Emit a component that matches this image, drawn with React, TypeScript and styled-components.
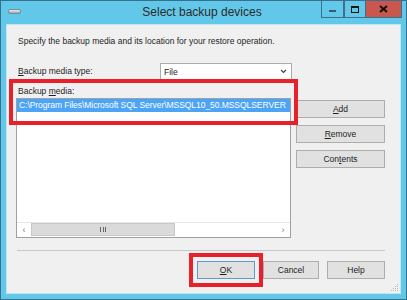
import styled, { createGlobalStyle } from "styled-components";

const GlobalStyle = createGlobalStyle`
  html, body {
    margin: 0;
    padding: 0;
    background: #ffffff;
  }
  * {
    box-sizing: border-box;
  }
`;

const Window = styled.div`
  width: 407px;
  height: 300px;
  border: 1px solid #3a6e8e;
  background-color: #62c8ea;
  padding: 0 5px 5px 5px;
  display: flex;
  flex-direction: column;
  font-family: "Liberation Sans", Arial, sans-serif;
  font-size: 8.5px;
  color: #1e1e1e;
  position: relative;
`;

const TitleBar = styled.div`
  height: 23px;
  display: flex;
  align-items: flex-start;
  position: relative;
`;

const WinIcon = styled.div`
  width: 13px;
  height: 5px;
  margin: 8px 0 0 2px;
  border-radius: 2px;
  background: linear-gradient(#e8eef4, #9aa6b2);
  border: 1px solid #7d8a96;
`;

const Title = styled.div`
  flex: 1;
  text-align: center;
  font-size: 12px;
  line-height: 23px;
  color: #2a2a2a;
  padding-left: 62px;
`;

const Caption = styled.div`
  display: flex;
  margin-top: -1px;
  margin-right: -1px;
  height: 18px;
`;

const CapButton = styled.div<{ $close?: boolean; $w: number }>`
  width: ${(p) => p.$w}px;
  height: 18px;
  display: flex;
  align-items: center;
  justify-content: center;
  background-color: ${(p) => (p.$close ? "#c9574d" : "#62c8ea")};
  border: 1px solid #3f6f8a;
  border-left-width: ${(p) => (p.$close ? 0 : 1)}px;
  &:first-child {
    border-left-width: 1px;
  }
`;

const MinGlyph = styled.div`
  width: 7px;
  height: 2px;
  background: #3a5a70;
  margin-top: 4px;
`;

const MaxGlyph = styled.div`
  width: 8px;
  height: 7px;
  border: 1.5px solid #111;
  border-top-width: 2.5px;
`;

const Client = styled.div`
  flex: 1;
  background-color: #f0f0f0;
  border: 1px solid #bfe6f5;
  padding: 10px 15px 0 9px;
  display: flex;
  flex-direction: column;
  position: relative;
`;

const Description = styled.div`
  line-height: 13px;
  padding-left: 2px;
`;

const TypeRow = styled.div`
  display: flex;
  align-items: center;
  margin-top: 15px;
  padding-left: 2px;
`;

const Label = styled.div`
  line-height: 13px;
`;

const TypeLabel = styled(Label)`
  width: 142px;
`;

const Combo = styled.div`
  width: 132px;
  height: 17px;
  background: #ffffff;
  border: 1px solid #acacac;
  display: flex;
  align-items: center;
  justify-content: space-between;
  padding: 0 4px 0 3px;
`;

const MainGrid = styled.div`
  display: grid;
  grid-template-columns: 275px 89px;
  column-gap: 5px;
  margin-top: 5px;
`;

const MediaLabel = styled(Label)`
  grid-column: 1;
  padding-left: 2px;
`;

const ListBox = styled.div`
  grid-column: 1;
  height: 140px;
  background: #ffffff;
  border: 1px solid #a0a0a0;
  display: flex;
  flex-direction: column;
  overflow: hidden;
`;

const ListBody = styled.div`
  flex: 1;
`;

const SelectedRow = styled.div`
  height: 13px;
  line-height: 13px;
  background-color: #4ca4f6;
  color: #ffffff;
  padding-left: 2px;
  white-space: nowrap;
  overflow: hidden;
  font-size: 8.5px;
  letter-spacing: -0.05px;
`;

const HScroll = styled.div`
  height: 14px;
  display: flex;
  border-top: 1px solid #e6e6e6;
  margin: 0 0 1px 0;
`;

const Arrow = styled.div`
  width: 14px;
  display: flex;
  align-items: center;
  justify-content: center;
  color: #7a7a7a;
  font-size: 9px;
  background: #ffffff;
`;

const Thumb = styled.div`
  width: 144px;
  background-color: #dadada;
  border: 1px solid #c8c8c8;
  display: flex;
  align-items: center;
  justify-content: center;
`;

const Grip = styled.div`
  width: 6px;
  height: 5px;
  border-left: 1px solid #666;
  border-right: 1px solid #666;
  position: relative;
  &:after {
    content: "";
    position: absolute;
    left: 2px;
    top: 0;
    width: 1px;
    height: 5px;
    background: #666;
  }
`;

const Track = styled.div`
  flex: 1;
  background: #ffffff;
`;

const SideButtons = styled.div`
  grid-column: 2;
  grid-row: 2;
  display: flex;
  flex-direction: column;
  gap: 7px;
  padding-top: 2px;
`;

const Button = styled.div<{ $w?: number; $default?: boolean }>`
  width: ${(p) => (p.$w ? `${p.$w}px` : "100%")};
  height: 18px;
  display: flex;
  align-items: center;
  justify-content: center;
  background-color: #e1e1e1;
  border: 1px solid ${(p) => (p.$default ? "#5a9ad6" : "#adadad")};
  color: #1e1e1e;
`;

const Separator = styled.div`
  height: 1px;
  background: #c8c8c8;
  margin: 12px 0 0 1px;
`;

const Footer = styled.div`
  display: flex;
  justify-content: flex-end;
  gap: 8px;
  margin-top: 10px;
`;

const Highlight = styled.div`
  outline: 4px solid #e8202a;
  outline-offset: 4px;
`;

const MediaMarker = styled.div`
  position: absolute;
  left: 2px;
  top: 54px;
  width: 289px;
  height: 46px;
  border: 4px solid #e8202a;
  pointer-events: none;
`;

const ResizeGrip = styled.svg`
  position: absolute;
  right: 1px;
  bottom: 1px;
`;

export default function App() {
  return (
    <>
      <GlobalStyle />
      <Window>
        <TitleBar>
          <WinIcon />
          <Title>Select backup devices</Title>
          <Caption>
            <CapButton $w={23}>
              <MinGlyph />
            </CapButton>
            <CapButton $w={22}>
              <MaxGlyph />
            </CapButton>
            <CapButton $w={36} $close>
              <svg width="9" height="8" viewBox="0 0 9 8">
                <path d="M1 1 L8 7 M8 1 L1 7" stroke="#111" strokeWidth="2" />
              </svg>
            </CapButton>
          </Caption>
        </TitleBar>
        <Client>
          <Description>
            Specify the backup media and its location for your restore operation.
          </Description>
          <TypeRow>
            <TypeLabel>
              <u>B</u>ackup media type:
            </TypeLabel>
            <Combo>
              <span>File</span>
              <svg width="7" height="5" viewBox="0 0 7 5">
                <path d="M1 1 L3.5 3.5 L6 1" stroke="#444" strokeWidth="1.2" fill="none" />
              </svg>
            </Combo>
          </TypeRow>
          <MainGrid>
            <MediaLabel>
              Backup <u>m</u>edia:
            </MediaLabel>
            <ListBox>
              <ListBody>
                <SelectedRow>
                  C:\Program Files\Microsoft SQL Server\MSSQL10_50.MSSQLSERVER
                </SelectedRow>
              </ListBody>
              <HScroll>
                <Arrow>‹</Arrow>
                <Thumb>
                  <Grip />
                </Thumb>
                <Track />
                <Arrow>›</Arrow>
              </HScroll>
            </ListBox>
            <SideButtons>
              <Button>
                <span>
                  <u>A</u>dd
                </span>
              </Button>
              <Button>
                <span>
                  <u>R</u>emove
                </span>
              </Button>
              <Button>
                <span>
                  Con<u>t</u>ents
                </span>
              </Button>
            </SideButtons>
          </MainGrid>
          <Separator />
          <Footer>
            <Highlight>
              <Button $w={58} $default>
                <span>
                  <u>O</u>K
                </span>
              </Button>
            </Highlight>
            <Button $w={56}>Cancel</Button>
            <Button $w={58}>Help</Button>
          </Footer>
          <MediaMarker />
          <ResizeGrip width="8" height="8" viewBox="0 0 8 8">
            <g fill="#b8b8b8">
              <rect x="6" y="0" width="1" height="1" />
              <rect x="4" y="2" width="1" height="1" />
              <rect x="6" y="2" width="1" height="1" />
              <rect x="2" y="4" width="1" height="1" />
              <rect x="4" y="4" width="1" height="1" />
              <rect x="6" y="4" width="1" height="1" />
              <rect x="0" y="6" width="1" height="1" />
              <rect x="2" y="6" width="1" height="1" />
              <rect x="4" y="6" width="1" height="1" />
              <rect x="6" y="6" width="1" height="1" />
            </g>
          </ResizeGrip>
        </Client>
      </Window>
    </>
  );
}
